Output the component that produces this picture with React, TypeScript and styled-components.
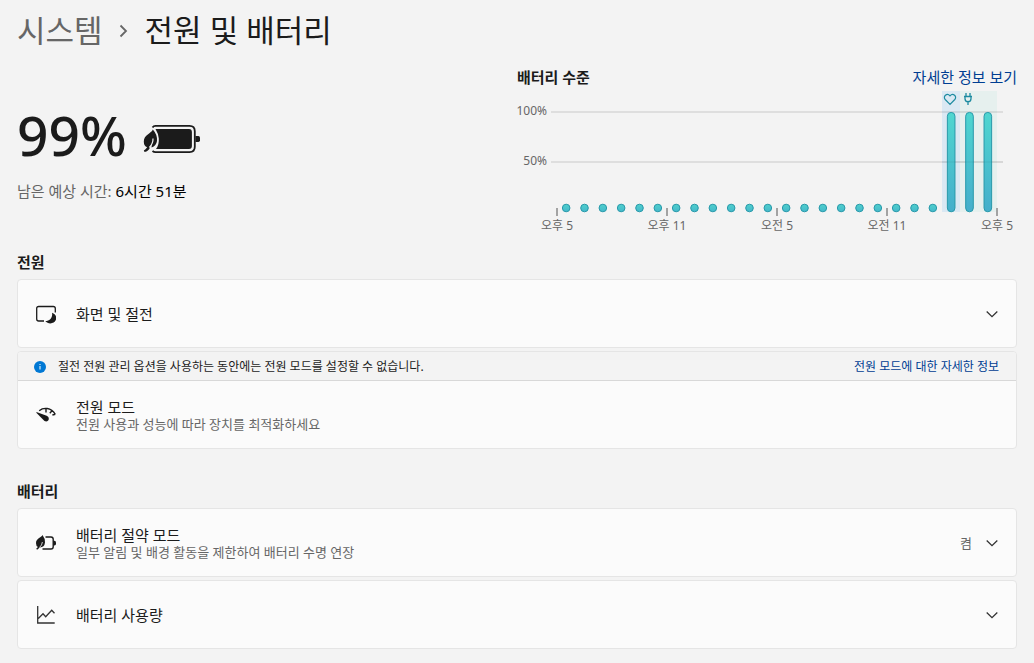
import React from 'react';
import styled, { createGlobalStyle } from 'styled-components';

const GlobalStyle = createGlobalStyle`
  *, *::before, *::after { box-sizing: border-box; }
  body {
    margin: 0;
    background: #f3f3f3;
    color: #1b1b1b;
    font-family: "Noto Sans", "Noto Sans CJK KR", sans-serif;
    font-size: 15px;
    line-height: 20px;
  }
  h1, h2, p { margin: 0; }
`;

const Page = styled.main`
  padding: 8px 17px 14px;
`;

const Breadcrumb = styled.nav`
  display: flex;
  align-items: center;
  gap: 15px;
  height: 44px;
  font-size: 31px;
  line-height: 44px;
`;

const Crumb = styled.a`
  color: #666;
  text-decoration: none;
`;

const PageTitle = styled.h1`
  font-size: 31px;
  font-weight: 400;
`;

const Overview = styled.section`
  display: grid;
  grid-template-columns: 1fr 1fr;
  margin-top: 15px;
`;

const Status = styled.div`
  display: flex;
  flex-direction: column;
  gap: 16px;
  padding-top: 38px;
`;

const ChargeRow = styled.div`
  display: flex;
  align-items: center;
  gap: 16px;
  height: 60px;

  svg { margin-top: 8px; }
`;

const Charge = styled.span`
  font-size: 55px;
  font-weight: 500;
  line-height: 60px;
`;

const Remaining = styled.p`
  color: #666;

  strong {
    color: #000;
    font-weight: 400;
  }
`;

const ChartHeader = styled.div`
  display: flex;
  justify-content: space-between;
  align-items: center;
`;

const Heading = styled.h2`
  font-size: 15px;
  font-weight: 700;
  line-height: 20px;
`;

const Link = styled.a<{ $small?: boolean }>`
  color: #003e92;
  font-size: ${(p) => (p.$small ? 12 : 15)}px;
  text-decoration: none;
`;

const Chart = styled.svg`
  display: block;
  width: 100%;
  margin-top: 3px;
  font-size: 12px;
  fill: #666;
`;

const Group = styled.section<{ $top: number }>`
  display: flex;
  flex-direction: column;
  gap: 3px;
  margin-top: ${(p) => p.$top}px;

  > ${Heading} { margin-bottom: 4px; }
`;

const Card = styled.div`
  border: 1px solid #e5e5e5;
  border-radius: 4px;
  background: #fbfbfb;
  overflow: hidden;
`;

const Row = styled.div`
  display: flex;
  align-items: center;
  gap: 20px;
  width: 100%;
  min-height: 67px;
  padding: 0 16px 0 18px;
  border: 0;
  background: transparent;
  color: inherit;
  font: inherit;
  text-align: left;
`;

const RowIcon = styled.svg`
  flex: none;
  width: 20px;
  height: 20px;
`;

const Label = styled.span`
  display: flex;
  flex: 1;
  flex-direction: column;
`;

const Title = styled.span`
  line-height: 18px;
`;

const Detail = styled.span`
  color: #666;
  font-size: 13px;
  line-height: 16px;
`;

const Controls = styled.span`
  display: flex;
  align-items: center;
  gap: 12px;
`;

const InfoBar = styled.div`
  display: flex;
  align-items: center;
  gap: 12px;
  height: 29px;
  padding: 2px 17px 0 16px;
  border-bottom: 1px solid #d8d8d8;
  background: #f3f3f3;
  font-size: 12px;

  p { flex: 1; }
`;

const Chevron = () => (
  <svg width="16" height="16" viewBox="0 0 16 16" fill="none" stroke="#333" strokeWidth="1.3" aria-hidden="true">
    <path d="M2.7 5.5 8 10.7 13.3 5.5" />
  </svg>
);

const BatteryLeaf = () => (
  <svg width="58" height="30" viewBox="0 0 58 30" fill="none" aria-hidden="true">
    <path d="M9.500 3.500Q10.500 1.900 12.500 1.900H46.500q5.300 0 5.300 5.300v15.600q0 5.300-5.300 5.300H12.500Q10.800 28.100 9.500 27" stroke="#1b1b1b" strokeWidth="1.800" />
    <path d="M12.500 5H46q2.900 0 2.900 2.900v14.200q0 2.900-2.900 2.900H13q3.300-4.500 2.800-10.500Q15.300 9.500 12.500 5Z" fill="#1b1b1b" />
    <path d="M52.500 12h2.800q1.700 0 1.700 1.700v2.600q0 1.700-1.700 1.700h-2.800Z" fill="#1b1b1b" />
    <path d="M9.800 5.500C8.500 9.500.8 10.500.8 17.500q0 4.500 3.400 5.800Q2.500 25.500.8 26.500l.8 1.600q3.900-.8 5.400-4.600Q8.600 18 8.600 23.500 13.300 21.800 14 17q.5-6.500-4.200-11.500Z" fill="#1b1b1b" />
    <path d="M10 14.500q.2 5-3.600 9" stroke="#f3f3f3" strokeWidth="1.200" />
  </svg>
);

const ScreenSleepIcon = () => (
  <RowIcon viewBox="0 0 20 20" fill="none" aria-hidden="true">
    <path d="M19.300 8.500V4.500q0-2-2-2H2.700q-2 0-2 2V15q0 2 2 2H8" stroke="#1b1b1b" strokeWidth="1.300" />
    <path d="M16 8.800c3.600 1.200 5 4.500 3.800 7.300-1.600 4-7.800 4.500-10.500.9 4.200.2 7.700-3.600 6.700-8.200Z" fill="#1b1b1b" />
  </RowIcon>
);

const GaugeIcon = () => (
  <RowIcon viewBox="0 0 20 20" fill="none" aria-hidden="true">
    <path d="M3.200 5.700C7.500 2.200 15 2.200 19.300 9.300M10 3.400v4M16 5.800l-2.200 2.400M19.400 9.200l-3 .8" stroke="#1b1b1b" strokeWidth="1.400" />
    <path d="M.3 7.800Q0 6.900 1.100 7.200l9.600 3.600c4 1.700 1.800 7.300-2.200 5.300Z" fill="#1b1b1b" />
  </RowIcon>
);

const SaverIcon = () => (
  <RowIcon viewBox="0 0 20 20" fill="none" aria-hidden="true">
    <path d="M9.500 4h5.500q2.200 0 2.200 2.200v7.600q0 2.200-2.200 2.200H6.500" stroke="#1b1b1b" strokeWidth="1.400" />
    <path d="M17.200 7.800h1.200q1.600 0 1.600 1.600v1.400q0 1.600-1.600 1.600h-1.200Z" fill="#1b1b1b" />
    <path d="M6.500 2C5.200 4.700 0 5.200 0 10.300q0 2.700 1.900 3.800L.2 15.800l.9 1 2.700-2.300q4.700-.2 5.200-5 .1-4.200-2.500-7.500Z" fill="#1b1b1b" />
    <path d="M6.400 9q-.3 3.200-2.900 5.500" stroke="#fbfbfb" strokeWidth=".8" />
  </RowIcon>
);

const UsageIcon = () => (
  <RowIcon viewBox="0 0 20 20" fill="none" stroke="#333" strokeWidth="1.300" aria-hidden="true">
    <path d="M1.700 1v17h17M2.300 13.500 7 8.800l2.700 2.900 6-6.500 2.800 3" />
  </RowIcon>
);

const InfoIcon = () => (
  <svg width="12" height="12" viewBox="0 0 12 12" aria-hidden="true">
    <circle cx="6" cy="6" r="6" fill="#0078d4" />
    <path d="M6 3v1M6 5v3.500" stroke="#fff" strokeWidth="1" />
  </svg>
);

const LEVELS = [...Array(21).fill(0), 100, 100, 100];
const HOURS = ['오후 5', '오후 11', '오전 5', '오전 11', '오후 5'];
const START = 40;
const STEP = 440 / 24;
const BASE = 122;

const BatteryChart = () => (
  <Chart viewBox="0 0 500 148" role="img" aria-label="배터리 수준">
    <defs>
      <linearGradient id="level" gradientUnits="userSpaceOnUse" x1="0" y1="22" x2="0" y2="122">
        <stop offset="0" stopColor="#4fd6d0" />
        <stop offset="1" stopColor="#45aecb" />
      </linearGradient>
      <linearGradient id="dot" x1="0" y1="0" x2="0" y2="1">
        <stop offset="0" stopColor="#4fd0cc" />
        <stop offset="1" stopColor="#45b8cb" />
      </linearGradient>
    </defs>
    <rect x="425" y="1" width="18" height="121" fill="#dae8f3" />
    <rect x="443" y="1" width="37" height="121" fill="#e6f0ee" />
    <path d="M34 22h452M34 72h452" stroke="#000" strokeOpacity=".085" strokeWidth="2" />
    {LEVELS.map((level, i) => {
      const height = level === 0 ? 7.6 : 99.4;
      return (
        <rect
          key={i}
          x={START + STEP * (i + 0.5) - 3.8}
          y={BASE - 0.2 - height}
          width="7.6"
          height={height}
          rx="3.800"
          fill={level === 0 ? 'url(#dot)' : 'url(#level)'}
          stroke="#2899aa"
          strokeWidth="1"
        />
      );
    })}
    <path d="M425 72h61" stroke="#000" strokeOpacity=".03" strokeWidth="2" />
    <path
      d="M433 14.300 428.200 9.500C425.500 6.500 430 2.300 433 5.800c3-3.500 7.500.7 4.800 3.700Z"
      fill="none"
      stroke="#1d8ba0"
      strokeWidth="1.200"
    />
    <path
      d="M449 3v3.500M453 3v3.500M447 6.500h8M448 6.500v2.200q0 3 3 3t3-3V6.500M451 11.500v3.500"
      fill="none"
      stroke="#1d8ba0"
      strokeWidth="1.300"
    />
    <text x="30" y="25" textAnchor="end">100%</text>
    <text x="30" y="75" textAnchor="end">50%</text>
    {HOURS.map((hour, i) => (
      <g key={i}>
        <rect x={START + i * 110 - 1} y="118" width="2" height="8" fill="#a3a3a3" />
        <text x={START + i * 110} y="140" textAnchor="middle">{hour}</text>
      </g>
    ))}
  </Chart>
);

export default function App() {
  return (
    <>
      <GlobalStyle />
      <Page>
        <Breadcrumb>
          <Crumb href="#system">시스템</Crumb>
          <svg width="12" height="16" viewBox="0 0 12 16" fill="none" stroke="#666" strokeWidth="1.800" aria-hidden="true">
            <path d="M2.500 3.500 8 9 2.500 14.500" />
          </svg>
          <PageTitle>전원 및 배터리</PageTitle>
        </Breadcrumb>

        <Overview>
          <Status>
            <ChargeRow>
              <Charge>99%</Charge>
              <BatteryLeaf />
            </ChargeRow>
            <Remaining>남은 예상 시간: <strong>6시간 51분</strong></Remaining>
          </Status>
          <div>
            <ChartHeader>
              <Heading>배터리 수준</Heading>
              <Link href="#details">자세한 정보 보기</Link>
            </ChartHeader>
            <BatteryChart />
          </div>
        </Overview>

        <Group $top={14}>
          <Heading>전원</Heading>
          <Card>
            <Row as="button" type="button">
              <ScreenSleepIcon />
              <Label><Title>화면 및 절전</Title></Label>
              <Controls><Chevron /></Controls>
            </Row>
          </Card>
          <Card>
            <InfoBar>
              <InfoIcon />
              <p>절전 전원 관리 옵션을 사용하는 동안에는 전원 모드를 설정할 수 없습니다.</p>
              <Link $small href="#power-mode">전원 모드에 대한 자세한 정보</Link>
            </InfoBar>
            <Row>
              <GaugeIcon />
              <Label>
                <Title>전원 모드</Title>
                <Detail>전원 사용과 성능에 따라 장치를 최적화하세요</Detail>
              </Label>
            </Row>
          </Card>
        </Group>

        <Group $top={32}>
          <Heading>배터리</Heading>
          <Card>
            <Row as="button" type="button">
              <SaverIcon />
              <Label>
                <Title>배터리 절약 모드</Title>
                <Detail>일부 알림 및 배경 활동을 제한하여 배터리 수명 연장</Detail>
              </Label>
              <Controls>
                <Detail>켬</Detail>
                <Chevron />
              </Controls>
            </Row>
          </Card>
          <Card>
            <Row as="button" type="button">
              <UsageIcon />
              <Label><Title>배터리 사용량</Title></Label>
              <Controls><Chevron /></Controls>
            </Row>
          </Card>
        </Group>
      </Page>
    </>
  );
}
